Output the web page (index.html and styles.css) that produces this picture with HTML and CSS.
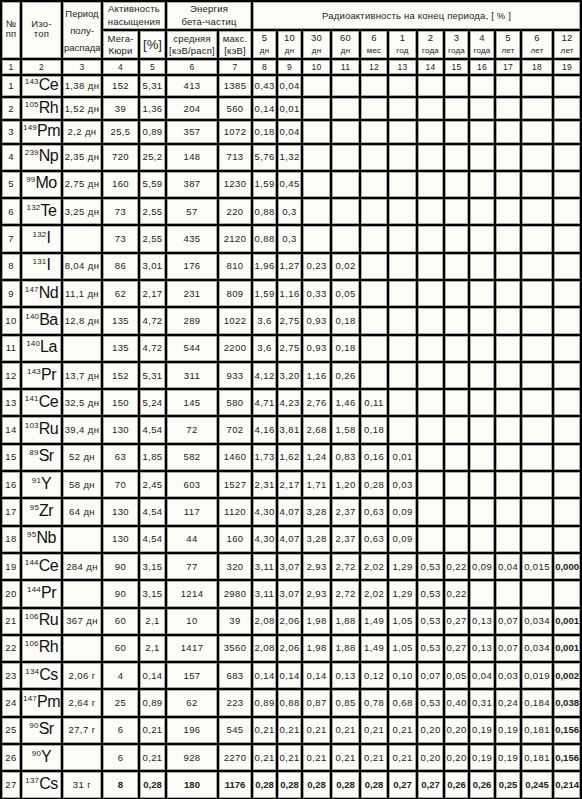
FILE: index.html
```html
<!DOCTYPE html>
<html lang="ru">
<head>
<meta charset="utf-8">
<title>Радиоактивность</title>
<link rel="stylesheet" href="styles.css">
</head>
<body>
<table class="t">
<colgroup>
<col class="c18"><col class="c39"><col class="c38"><col class="c35"><col class="c25"><col class="c50"><col class="c32"><col class="c23"><col class="c23"><col class="c27"><col class="c27"><col class="c26"><col class="c27"><col class="c25"><col class="c23"><col class="c24"><col class="c24"><col class="c30"><col class="c26">
</colgroup>
<thead>
<tr class="ha">
<td rowspan="2" class="hd hn">№<br>пп</td>
<td rowspan="2" class="hd hn">Изо-<br>топ</td>
<td rowspan="2" class="hd hp">Период<br>полу-<br>распада</td>
<td colspan="2" class="hd hg">Активность<br>насыщения</td>
<td colspan="2" class="hd hg">Энергия<br>бета-частиц</td>
<td colspan="12" class="hd">Радиоактивность на конец периода, [ % ]</td>
</tr>
<tr class="hb">
<td class="hd hs">Мега-<br>Кюри</td>
<td class="hd hpct">[%]</td>
<td class="hd hs">средняя<br>[кэВ/расп]</td>
<td class="hd hs">макс.<br>[кэВ]</td>
<td class="hd hs">5<br><span class="u">дн</span></td>
<td class="hd hs">10<br><span class="u">дн</span></td>
<td class="hd hs">30<br><span class="u">дн</span></td>
<td class="hd hs">60<br><span class="u">дн</span></td>
<td class="hd hs">6<br><span class="u">мес</span></td>
<td class="hd hs">1<br><span class="u">год</span></td>
<td class="hd hs">2<br><span class="u">года</span></td>
<td class="hd hs">3<br><span class="u">года</span></td>
<td class="hd hs">4<br><span class="u">года</span></td>
<td class="hd hs">5<br><span class="u">лет</span></td>
<td class="hd hs">6<br><span class="u">лет</span></td>
<td class="hd hs">12<br><span class="u">лет</span></td>
</tr>
<tr class="hnum">
<td>1</td><td>2</td><td>3</td><td>4</td><td>5</td><td>6</td><td>7</td><td>8</td><td>9</td><td>10</td><td>11</td><td>12</td><td>13</td><td>14</td><td>15</td><td>16</td><td>17</td><td>18</td><td>19</td>
</tr>
</thead>
<tbody>
<tr class="r1"><td>1</td><td class="iso"><span class="m">143</span><span class="s">Ce</span></td><td>1,38 дн</td><td>152</td><td>5,31</td><td>413</td><td>1385</td><td>0,43</td><td>0,04</td><td></td><td></td><td></td><td></td><td></td><td></td><td></td><td></td><td></td><td></td></tr>
<tr class="r2"><td>2</td><td class="iso"><span class="m">105</span><span class="s">Rh</span></td><td>1,52 дн</td><td>39</td><td>1,36</td><td>204</td><td>560</td><td>0,14</td><td>0,01</td><td></td><td></td><td></td><td></td><td></td><td></td><td></td><td></td><td></td><td></td></tr>
<tr class="r3"><td>3</td><td class="iso"><span class="m">149</span><span class="s">Pm</span></td><td>2,2 дн</td><td>25,5</td><td>0,89</td><td>357</td><td>1072</td><td>0,18</td><td>0,04</td><td></td><td></td><td></td><td></td><td></td><td></td><td></td><td></td><td></td><td></td></tr>
<tr><td>4</td><td class="iso"><span class="m">239</span><span class="s">Np</span></td><td>2,35 дн</td><td>720</td><td>25,2</td><td>148</td><td>713</td><td>5,76</td><td>1,32</td><td></td><td></td><td></td><td></td><td></td><td></td><td></td><td></td><td></td><td></td></tr>
<tr><td>5</td><td class="iso"><span class="m">99</span><span class="s">Mo</span></td><td>2,75 дн</td><td>160</td><td>5,59</td><td>387</td><td>1230</td><td>1,59</td><td>0,45</td><td></td><td></td><td></td><td></td><td></td><td></td><td></td><td></td><td></td><td></td></tr>
<tr><td>6</td><td class="iso"><span class="m">132</span><span class="s">Te</span></td><td>3,25 дн</td><td>73</td><td>2,55</td><td>57</td><td>220</td><td>0,88</td><td>0,3</td><td></td><td></td><td></td><td></td><td></td><td></td><td></td><td></td><td></td><td></td></tr>
<tr><td>7</td><td class="iso"><span class="m">132</span><span class="s">I</span></td><td></td><td>73</td><td>2,55</td><td>435</td><td>2120</td><td>0,88</td><td>0,3</td><td></td><td></td><td></td><td></td><td></td><td></td><td></td><td></td><td></td><td></td></tr>
<tr><td>8</td><td class="iso"><span class="m">131</span><span class="s">I</span></td><td>8,04 дн</td><td>86</td><td>3,01</td><td>176</td><td>810</td><td>1,96</td><td>1,27</td><td>0,23</td><td>0,02</td><td></td><td></td><td></td><td></td><td></td><td></td><td></td><td></td></tr>
<tr><td>9</td><td class="iso"><span class="m">147</span><span class="s">Nd</span></td><td>11,1 дн</td><td>62</td><td>2,17</td><td>231</td><td>809</td><td>1,59</td><td>1,16</td><td>0,33</td><td>0,05</td><td></td><td></td><td></td><td></td><td></td><td></td><td></td><td></td></tr>
<tr><td>10</td><td class="iso"><span class="m">140</span><span class="s">Ba</span></td><td>12,8 дн</td><td>135</td><td>4,72</td><td>289</td><td>1022</td><td>3,6</td><td>2,75</td><td>0,93</td><td>0,18</td><td></td><td></td><td></td><td></td><td></td><td></td><td></td><td></td></tr>
<tr><td>11</td><td class="iso"><span class="m">140</span><span class="s">La</span></td><td></td><td>135</td><td>4,72</td><td>544</td><td>2200</td><td>3,6</td><td>2,75</td><td>0,93</td><td>0,18</td><td></td><td></td><td></td><td></td><td></td><td></td><td></td><td></td></tr>
<tr><td>12</td><td class="iso"><span class="m">143</span><span class="s">Pr</span></td><td>13,7 дн</td><td>152</td><td>5,31</td><td>311</td><td>933</td><td>4,12</td><td>3,20</td><td>1,16</td><td>0,26</td><td></td><td></td><td></td><td></td><td></td><td></td><td></td><td></td></tr>
<tr><td>13</td><td class="iso"><span class="m">141</span><span class="s">Ce</span></td><td>32,5 дн</td><td>150</td><td>5,24</td><td>145</td><td>580</td><td>4,71</td><td>4,23</td><td>2,76</td><td>1,46</td><td>0,11</td><td></td><td></td><td></td><td></td><td></td><td></td><td></td></tr>
<tr><td>14</td><td class="iso"><span class="m">103</span><span class="s">Ru</span></td><td>39,4 дн</td><td>130</td><td>4,54</td><td>72</td><td>702</td><td>4,16</td><td>3,81</td><td>2,68</td><td>1,58</td><td>0,18</td><td></td><td></td><td></td><td></td><td></td><td></td><td></td></tr>
<tr><td>15</td><td class="iso"><span class="m">89</span><span class="s">Sr</span></td><td>52 дн</td><td>63</td><td>1,85</td><td>582</td><td>1460</td><td>1,73</td><td>1,62</td><td>1,24</td><td>0,83</td><td>0,16</td><td>0,01</td><td></td><td></td><td></td><td></td><td></td><td></td></tr>
<tr><td>16</td><td class="iso"><span class="m">91</span><span class="s">Y</span></td><td>58 дн</td><td>70</td><td>2,45</td><td>603</td><td>1527</td><td>2,31</td><td>2,17</td><td>1,71</td><td>1,20</td><td>0,28</td><td>0,03</td><td></td><td></td><td></td><td></td><td></td><td></td></tr>
<tr><td>17</td><td class="iso"><span class="m">95</span><span class="s">Zr</span></td><td>64 дн</td><td>130</td><td>4,54</td><td>117</td><td>1120</td><td>4,30</td><td>4,07</td><td>3,28</td><td>2,37</td><td>0,63</td><td>0,09</td><td></td><td></td><td></td><td></td><td></td><td></td></tr>
<tr><td>18</td><td class="iso"><span class="m">95</span><span class="s">Nb</span></td><td></td><td>130</td><td>4,54</td><td>44</td><td>160</td><td>4,30</td><td>4,07</td><td>3,28</td><td>2,37</td><td>0,63</td><td>0,09</td><td></td><td></td><td></td><td></td><td></td><td></td></tr>
<tr><td>19</td><td class="iso"><span class="m">144</span><span class="s">Ce</span></td><td>284 дн</td><td>90</td><td>3,15</td><td>77</td><td>320</td><td>3,11</td><td>3,07</td><td>2,93</td><td>2,72</td><td>2,02</td><td>1,29</td><td>0,53</td><td>0,22</td><td>0,09</td><td>0,04</td><td>0,015</td><td class="b">0,000</td></tr>
<tr><td>20</td><td class="iso"><span class="m">144</span><span class="s">Pr</span></td><td></td><td>90</td><td>3,15</td><td>1214</td><td>2980</td><td>3,11</td><td>3,07</td><td>2,93</td><td>2,72</td><td>2,02</td><td>1,29</td><td>0,53</td><td>0,22</td><td></td><td></td><td></td><td></td></tr>
<tr><td>21</td><td class="iso"><span class="m">106</span><span class="s">Ru</span></td><td>367 дн</td><td>60</td><td>2,1</td><td>10</td><td>39</td><td>2,08</td><td>2,06</td><td>1,98</td><td>1,88</td><td>1,49</td><td>1,05</td><td>0,53</td><td>0,27</td><td>0,13</td><td>0,07</td><td>0,034</td><td class="b">0,001</td></tr>
<tr><td>22</td><td class="iso"><span class="m">106</span><span class="s">Rh</span></td><td></td><td>60</td><td>2,1</td><td>1417</td><td>3560</td><td>2,08</td><td>2,06</td><td>1,98</td><td>1,88</td><td>1,49</td><td>1,05</td><td>0,53</td><td>0,27</td><td>0,13</td><td>0,07</td><td>0,034</td><td class="b">0,001</td></tr>
<tr><td>23</td><td class="iso"><span class="m">134</span><span class="s">Cs</span></td><td>2,06 г</td><td>4</td><td>0,14</td><td>157</td><td>683</td><td>0,14</td><td>0,14</td><td>0,14</td><td>0,13</td><td>0,12</td><td>0,10</td><td>0,07</td><td>0,05</td><td>0,04</td><td>0,03</td><td>0,019</td><td class="b">0,002</td></tr>
<tr><td>24</td><td class="iso"><span class="m">147</span><span class="s">Pm</span></td><td>2,64 г</td><td>25</td><td>0,89</td><td>62</td><td>223</td><td>0,89</td><td>0,88</td><td>0,87</td><td>0,85</td><td>0,78</td><td>0,68</td><td>0,53</td><td>0,40</td><td>0,31</td><td>0,24</td><td>0,184</td><td class="b">0,038</td></tr>
<tr><td>25</td><td class="iso"><span class="m">90</span><span class="s">Sr</span></td><td>27,7 г</td><td>6</td><td>0,21</td><td>196</td><td>545</td><td>0,21</td><td>0,21</td><td>0,21</td><td>0,21</td><td>0,21</td><td>0,21</td><td>0,20</td><td>0,20</td><td>0,19</td><td>0,19</td><td>0,181</td><td class="b">0,156</td></tr>
<tr><td>26</td><td class="iso"><span class="m">90</span><span class="s">Y</span></td><td></td><td>6</td><td>0,21</td><td>928</td><td>2270</td><td>0,21</td><td>0,21</td><td>0,21</td><td>0,21</td><td>0,21</td><td>0,21</td><td>0,20</td><td>0,20</td><td>0,19</td><td>0,19</td><td>0,181</td><td class="b">0,156</td></tr>
<tr class="last"><td>27</td><td class="iso"><span class="m">137</span><span class="s">Cs</span></td><td>31 г</td><td class="b">8</td><td class="b">0,28</td><td class="b">180</td><td class="b">1176</td><td class="b">0,28</td><td class="b">0,28</td><td class="b">0,28</td><td class="b">0,28</td><td class="b">0,28</td><td class="b">0,27</td><td class="b">0,27</td><td class="b">0,26</td><td class="b">0,26</td><td class="b">0,25</td><td class="b">0,245</td><td class="b">0,214</td></tr>
</tbody>
</table>
</body>
</html>
```

FILE: styles.css
```css
html, body {
  margin: 0;
  padding: 0;
  background: #ffffff;
}

.t {
  border-collapse: separate;
  border-spacing: 2px;
  background: #000000;
  table-layout: fixed;
  width: 582px;
  font-family: "Liberation Sans", Arial, sans-serif;
  font-size: 9.5px;
  color: #222222;
}

.t col { box-sizing: border-box; }
.c18 { width: 18px; }
.c23 { width: 23px; }
.c24 { width: 24px; }
.c25 { width: 25px; }
.c26 { width: 26px; }
.c27 { width: 27px; }
.c30 { width: 30px; }
.c32 { width: 32px; }
.c35 { width: 35px; }
.c38 { width: 38px; }
.c39 { width: 39px; }
.c50 { width: 50px; }

.t td {
  box-sizing: border-box;
  background: #fcfcf7;
  border: 1px solid #a8a8a8;
  padding: 0;
  text-align: center;
  vertical-align: middle;
  white-space: nowrap;
  overflow: hidden;
  letter-spacing: 0.4px;
  line-height: 12px;
}

.ha { height: 27px; }
.hb { height: 26px; }
.hnum { height: 14px; }
.t .hnum td { font-size: 8.5px; line-height: 10px; }
tbody tr { height: 25.3px; }
tbody tr.r1 { height: 20px; }
tbody tr.r2 { height: 21px; }
tbody tr.r3 { height: 21.5px; }

.t td.hd { font-size: 9.5px; letter-spacing: 0.2px; }
.t td.hn { line-height: 10px; padding-bottom: 2px; }
.t td.hp { line-height: 17px; letter-spacing: 0; }
.t td.hg { line-height: 12.5px; }
.t td.hs { line-height: 12px; }
.t td.hpct { font-size: 13px; letter-spacing: 0; line-height: 14px; }
.u { font-size: 8px; }

.t td.iso { line-height: 16px; letter-spacing: 0; }
.iso .m {
  font-size: 8px;
  letter-spacing: 0.2px;
  vertical-align: 6px;
  line-height: 0;
}
.iso .s {
  font-size: 16px;
  letter-spacing: -0.5px;
  color: #111111;
}

.t td.b { font-weight: bold; letter-spacing: 0; }
```
